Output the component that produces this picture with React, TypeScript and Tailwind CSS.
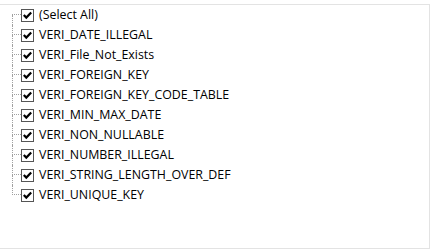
const items = [
  "(Select All)",
  "VERI_DATE_ILLEGAL",
  "VERI_File_Not_Exists",
  "VERI_FOREIGN_KEY",
  "VERI_FOREIGN_KEY_CODE_TABLE",
  "VERI_MIN_MAX_DATE",
  "VERI_NON_NULLABLE",
  "VERI_NUMBER_ILLEGAL",
  "VERI_STRING_LENGTH_OVER_DEF",
  "VERI_UNIQUE_KEY",
];

function CheckBox() {
  return (
    <div className="w-[13px] h-[13px] border border-[#555555] bg-white flex items-center justify-center shrink-0">
      <svg width="11" height="11" viewBox="0 0 11 11">
        <path d="M1.8 5 L4.3 7.6 L9.2 2.6" fill="none" stroke="#000" strokeWidth="2.2" />
      </svg>
    </div>
  );
}

export default function App() {
  return (
    <div className="w-[435px] h-[252px] bg-white pt-[4px]" style={{ fontFamily: "'Open Sans', 'Noto Sans', sans-serif" }}>
      <div className="w-[430px] h-[245px] border-t border-r border-b border-[#e3e3e3]">
        <ul className="pl-[12px]">
          {items.map((label, i) => (
            <li key={i} className="h-5 flex items-center">
              <div className="w-[9px] h-5 flex flex-col shrink-0">
                <div
                  className={`h-[10px] border-b border-dotted border-[#a0a0a0] ${
                    i === 0 ? "" : "border-l"
                  }`}
                />
                <div
                  className={`h-[10px] border-dotted border-[#a0a0a0] ${
                    i === items.length - 1 ? "" : "border-l"
                  }`}
                />
              </div>
              <CheckBox />
              <span className="ml-[5px] text-[12.4px] leading-none text-black whitespace-nowrap">{label}</span>
            </li>
          ))}
        </ul>
      </div>
    </div>
  );
}
